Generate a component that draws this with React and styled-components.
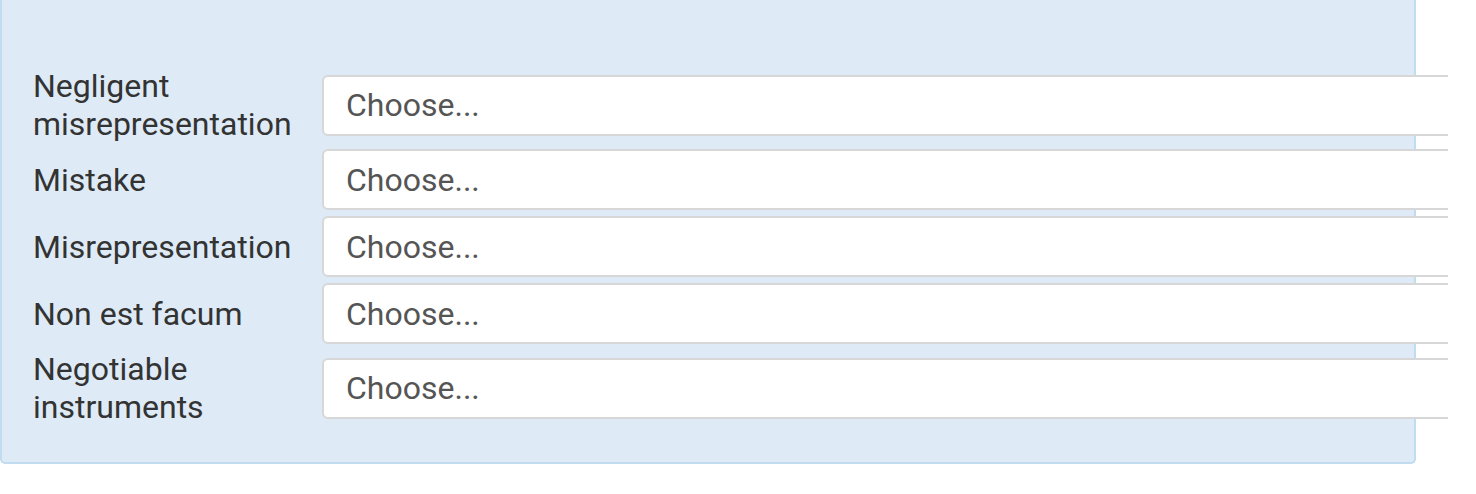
import React from "react";
import styled, { createGlobalStyle } from "styled-components";

const GlobalStyle = createGlobalStyle`
  html, body {
    margin: 0;
    padding: 0;
    background: #ffffff;
  }
  body {
    font-family: Roboto, "Liberation Sans", Arial, sans-serif;
  }
`;

const Viewport = styled.div`
  width: 1448px;
  height: 494px;
  overflow: hidden;
`;

const Panel = styled.div`
  width: 1416px;
  box-sizing: border-box;
  background: #deebf6;
  border: 2px solid #c2dcef;
  border-top: none;
  border-radius: 0 0 5px 5px;
  padding: 67px 0 36px 31px;
`;

const Form = styled.div`
  display: grid;
  grid-template-columns: 275px 1200px;
  column-gap: 14px;
  row-gap: 6px;
  align-items: center;
`;

const Label = styled.label`
  font-size: 32px;
  line-height: 38px;
  color: #333333;
`;

const Select = styled.select`
  appearance: none;
  -webkit-appearance: none;
  height: 61px;
  width: 100%;
  box-sizing: border-box;
  border: 2px solid #d7d7d7;
  border-radius: 6px;
  background: #ffffff;
  padding: 0 22px;
  font-family: Roboto, "Liberation Sans", Arial, sans-serif;
  font-size: 32px;
  color: #555555;
  outline: none;
`;

const fields = [
  "Negligent misrepresentation",
  "Mistake",
  "Misrepresentation",
  "Non est facum",
  "Negotiable instruments",
];

export default function App() {
  return (
    <>
      <GlobalStyle />
      <Viewport>
        <Panel>
          <Form>
            {fields.map((name) => (
              <React.Fragment key={name}>
                <Label>{name}</Label>
                <Select defaultValue="">
                  <option value="">Choose...</option>
                  <option value="yes">Yes</option>
                  <option value="no">No</option>
                </Select>
              </React.Fragment>
            ))}
          </Form>
        </Panel>
      </Viewport>
    </>
  );
}
